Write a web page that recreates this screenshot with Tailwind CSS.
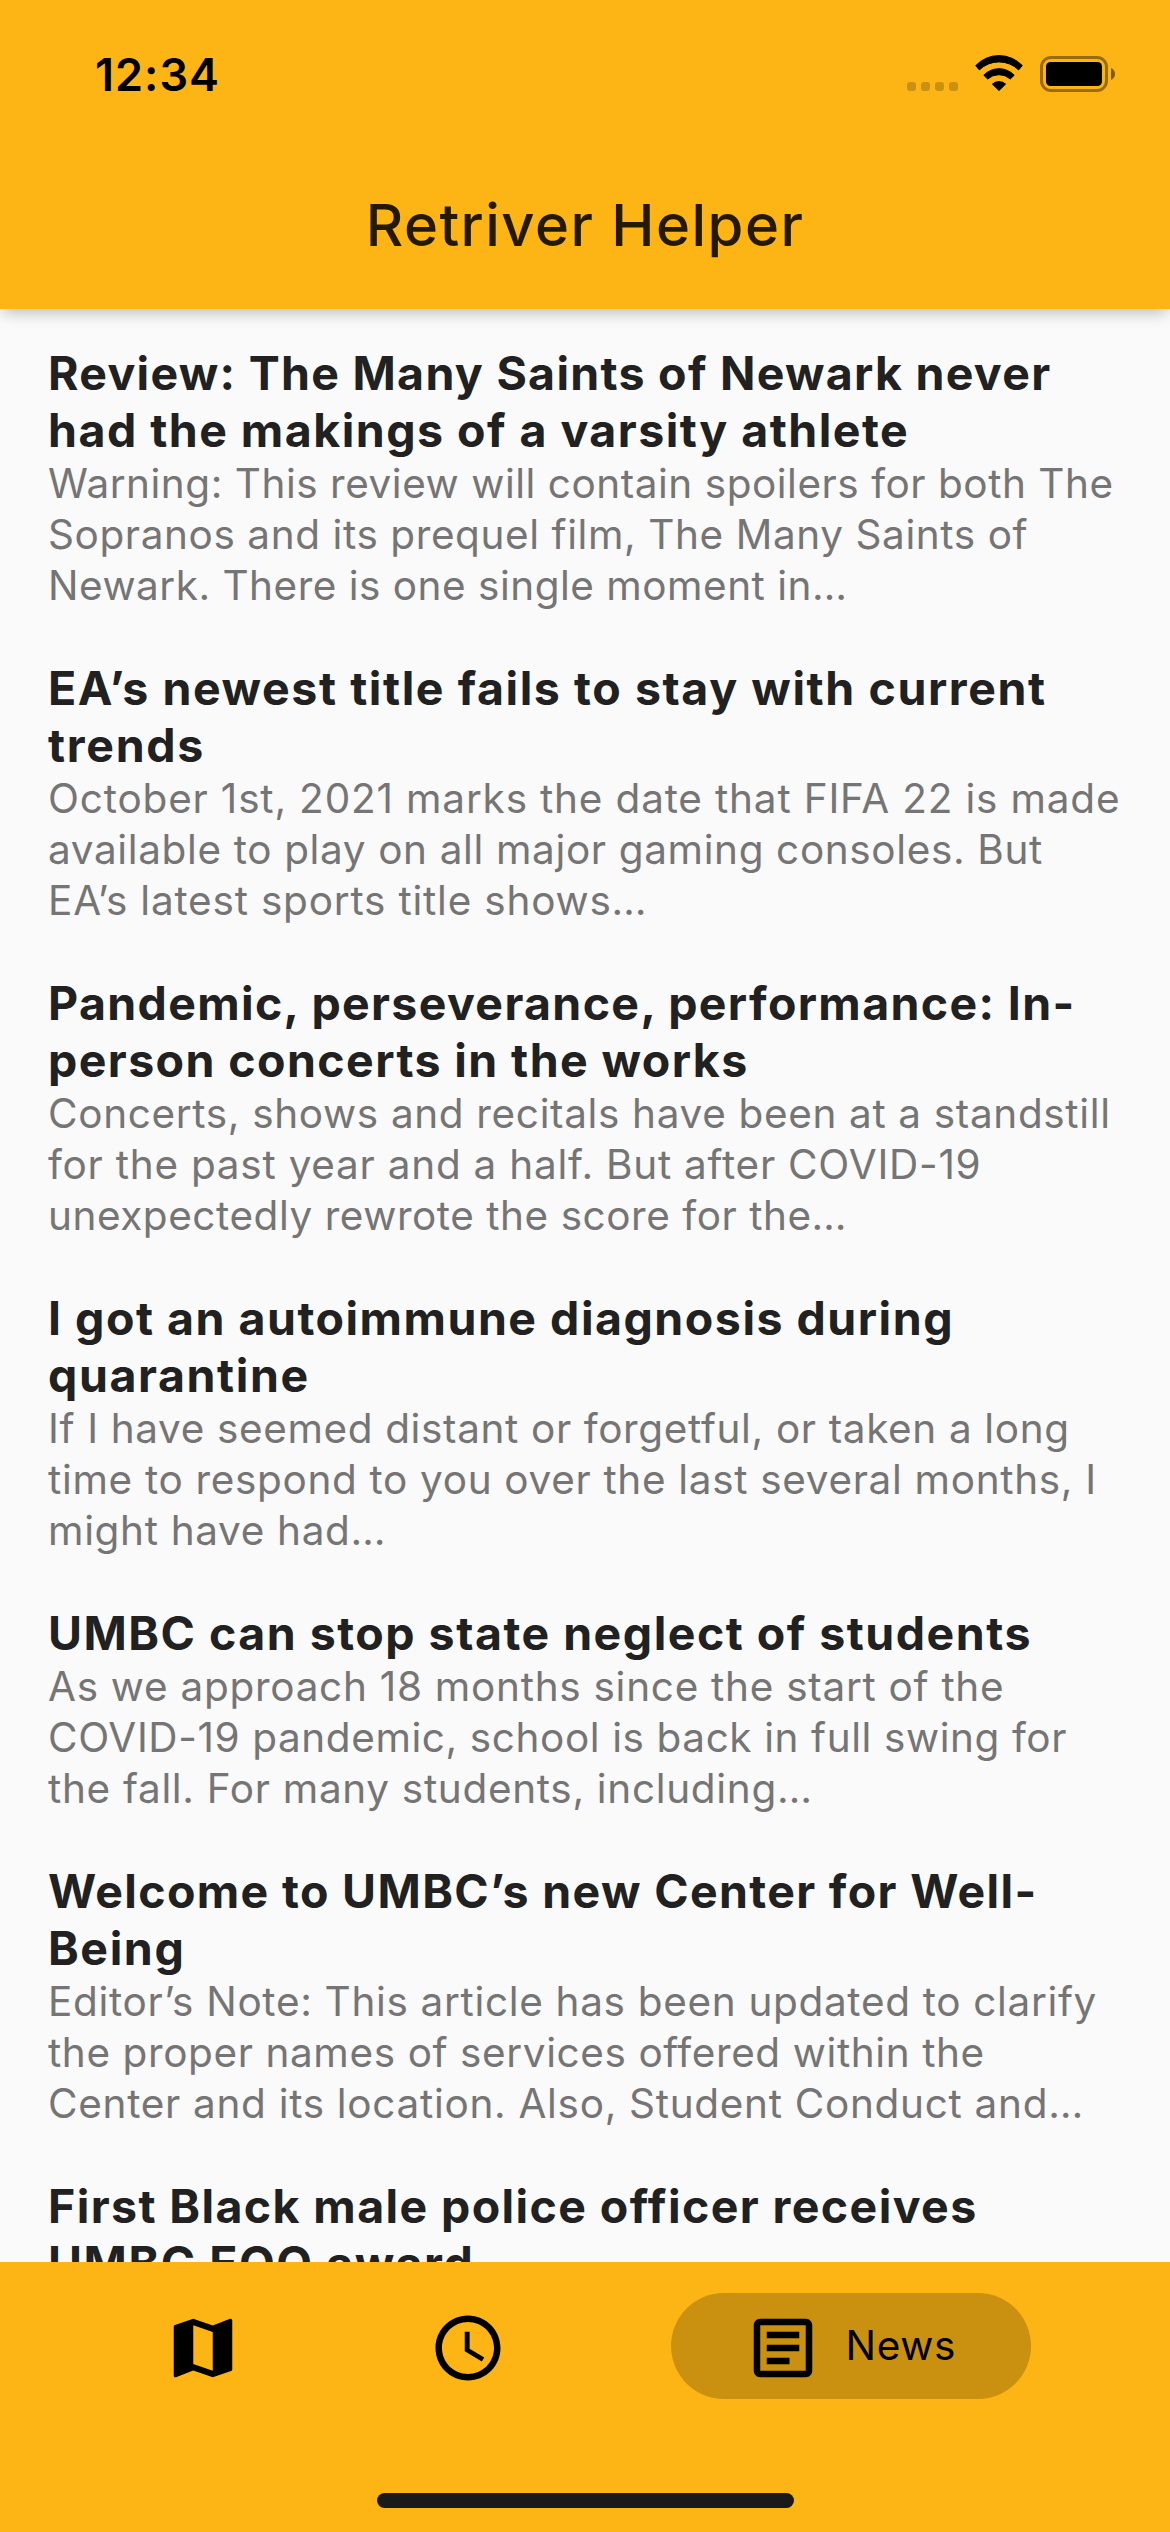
<!DOCTYPE html>
<html lang="en">
<head>
<meta charset="utf-8">
<title>Retriver Helper</title>
<script src="https://cdn.jsdelivr.net/npm/@tailwindcss/browser@4"></script>
</head>
<body class="font-['Inter',sans-serif] bg-[#fafafa]">
<div class="w-[1170px] h-[2532px] flex flex-col overflow-hidden bg-[#fafafa]">

  <header class="h-[309px] shrink-0 relative z-10 bg-[#fdb515] shadow-[0_6px_15px_-3px_rgba(0,0,0,0.27)]">
    <!-- Status bar -->
    <div class="h-[141px] pl-[95px] pr-[54px] flex items-start justify-between text-black">
      <span class="mt-[48px] text-[45px] leading-[54px] font-semibold tracking-[1px]">12:34</span>
      <div class="mt-[55px] flex items-start">
        <div class="flex gap-[5px] mt-[27px]">
          <i class="size-[9px] rounded-[3px] bg-black/20"></i>
          <i class="size-[9px] rounded-[3px] bg-black/20"></i>
          <i class="size-[9px] rounded-[3px] bg-black/20"></i>
          <i class="size-[9px] rounded-[3px] bg-black/20"></i>
        </div>
        <svg class="ml-[17px]" width="48" height="36" viewBox="0 0 48 36" fill="#000">
          <path stroke="#000" stroke-width="1" stroke-linejoin="round" d="M.7 10.6A32 32 0 0 1 47.3 10.6L43.6 14.9A28 28 0 0 0 4.4 14.9Z"/>
          <path stroke="#000" stroke-width="1" stroke-linejoin="round" d="M8.8 20.2A21 21 0 0 1 39.2 20.2L35.3 24A17 17 0 0 0 12.7 24Z"/>
          <path stroke="#000" stroke-width="1" stroke-linejoin="round" d="M17.4 29.1A10 10 0 0 1 30.6 29.1L24 35.6Z"/>
        </svg>
        <svg class="ml-[17px] mt-px" width="76" height="36" viewBox="0 0 76 36">
          <rect x="1.5" y="1.5" width="65" height="33" rx="9.5" fill="none" stroke="#000" stroke-opacity=".4" stroke-width="3"/>
          <rect x="6" y="6" width="56" height="24" rx="4.5" fill="#000"/>
          <path d="M71 12C73.6 13 75 15.400 75 18S73.600 23 71 24Z" fill="#000" fill-opacity=".5"/>
        </svg>
      </div>
    </div>
    <!-- App bar -->
    <div class="h-[168px] flex items-center justify-center">
      <h1 class="text-[58px] leading-[70px] font-medium tracking-[1.46px] text-[#241a03]">Retriver Helper</h1>
    </div>
  </header>

  <main class="h-[1953px] shrink-0 overflow-hidden pt-[35.500px] px-[48px] flex flex-col gap-[49px] whitespace-nowrap">
    <article>
      <h2 class="text-[46.5px] leading-[57px] font-bold text-[#212121]"><span class="block tracking-[1.28px]">Review: The Many Saints of Newark never</span><span class="block tracking-[1.47px]">had the makings of a varsity athlete</span></h2>
      <p class="-mt-px text-[40.5px] leading-[51px] text-[#757575]"><span class="block tracking-[0.53px]">Warning: This review will contain spoilers for both The</span><span class="block tracking-[0.59px]">Sopranos and its prequel film, The Many Saints of</span><span class="block tracking-[0.5px]">Newark. There is one single moment in…</span></p>
    </article>
    <article>
      <h2 class="text-[46.5px] leading-[57px] font-bold text-[#212121]"><span class="block tracking-[1.58px]">EA’s newest title fails to stay with current</span><span class="block tracking-[1.7px]">trends</span></h2>
      <p class="-mt-px text-[40.5px] leading-[51px] text-[#757575]"><span class="block tracking-[0.82px]">October 1st, 2021 marks the date that FIFA 22 is made</span><span class="block tracking-[0.63px]">available to play on all major gaming consoles. But</span><span class="block tracking-[0.79px]">EA’s latest sports title shows…</span></p>
    </article>
    <article>
      <h2 class="text-[46.5px] leading-[57px] font-bold text-[#212121]"><span class="block tracking-[1.34px]">Pandemic, perseverance, performance: In-</span><span class="block tracking-[1.4px]">person concerts in the works</span></h2>
      <p class="-mt-px text-[40.5px] leading-[51px] text-[#757575]"><span class="block tracking-[0.65px]">Concerts, shows and recitals have been at a standstill</span><span class="block tracking-[0.75px]">for the past year and a half. But after COVID-19</span><span class="block tracking-[0.54px]">unexpectedly rewrote the score for the…</span></p>
    </article>
    <article>
      <h2 class="text-[46.5px] leading-[57px] font-bold text-[#212121]"><span class="block tracking-[1.5px]">I got an autoimmune diagnosis during</span><span class="block tracking-[1.6px]">quarantine</span></h2>
      <p class="-mt-px text-[40.5px] leading-[51px] text-[#757575]"><span class="block tracking-[0.63px]">If I have seemed distant or forgetful, or taken a long</span><span class="block tracking-[0.67px]">time to respond to you over the last several months, I</span><span class="block tracking-[0.66px]">might have had…</span></p>
    </article>
    <article>
      <h2 class="text-[46.5px] leading-[57px] font-bold text-[#212121]"><span class="block tracking-[1.49px]">UMBC can stop state neglect of students</span></h2>
      <p class="-mt-px text-[40.5px] leading-[51px] text-[#757575]"><span class="block tracking-[0.72px]">As we approach 18 months since the start of the</span><span class="block tracking-[0.59px]">COVID-19 pandemic, school is back in full swing for</span><span class="block tracking-[0.68px]">the fall. For many students, including…</span></p>
    </article>
    <article>
      <h2 class="text-[46.5px] leading-[57px] font-bold text-[#212121]"><span class="block tracking-[1.34px]">Welcome to UMBC’s new Center for Well-</span><span class="block tracking-[1.6px]">Being</span></h2>
      <p class="-mt-px text-[40.5px] leading-[51px] text-[#757575]"><span class="block tracking-[0.67px]">Editor’s Note: This article has been updated to clarify</span><span class="block tracking-[0.6px]">the proper names of services offered within the</span><span class="block tracking-[0.69px]">Center and its location. Also, Student Conduct and…</span></p>
    </article>
    <article>
      <h2 class="text-[46.5px] leading-[57px] font-bold text-[#212121]"><span class="block tracking-[1.39px]">First Black male police officer receives</span><span class="block tracking-[1.52px]">UMBC EOO award</span></h2>
    </article>
  </main>

  <nav class="h-[270px] shrink-0 bg-[#fdb515] flex flex-col justify-between items-center pt-[31px] pb-[24px]">
    <div class="w-full pl-[164px] flex items-center">
      <svg class="size-[78px] mt-[4px]" viewBox="0 0 24 24" fill="#000"><path d="M20.5 3l-.16.03L15 5.100 9 3 3.360 4.900c-.21.07-.36.25-.36.48V20.500c0 .28.22.5.5.5l.16-.03L9 18.900l6 2.100 5.640-1.900c.21-.07.36-.25.36-.48V3.500c0-.28-.22-.5-.5-.5zM15 19l-6-2.110V5l6 2.110V19z"/></svg>
      <svg class="size-[78px] mt-[4px] ml-[187px]" viewBox="0 0 24 24" fill="#000"><path d="M11.990 2C6.470 2 2 6.480 2 12s4.470 10 9.990 10C17.520 22 22 17.520 22 12S17.520 2 11.990 2zM12 20c-4.420 0-8-3.580-8-8s3.580-8 8-8 8 3.580 8 8-3.580 8-8 8zm.5-13H11v6l5.250 3.150.75-1.230-4.500-2.670z"/></svg>
      <div class="ml-[163.5px] w-[360px] h-[105.5px] rounded-full bg-[#ca9111] pl-[73.500px] flex items-center">
        <svg class="size-[78px] mt-[4px]" viewBox="0 0 24 24" fill="#000"><path d="M19 5v14H5V5h14m0-2H5c-1.100 0-2 .9-2 2v14c0 1.100.9 2 2 2h14c1.100 0 2-.9 2-2V5c0-1.100-.9-2-2-2z"/><path d="M14 17H7v-2h7v2zm3-4H7v-2h10v2zm0-4H7V7h10v2z"/></svg>
        <span class="ml-[23.500px] text-[40.5px] leading-[51px] tracking-[0.68px] text-black">News</span>
      </div>
    </div>
    <div class="w-[417px] h-[15px] rounded-full bg-[#1a1a1a]"></div>
  </nav>
</div>
</body>
</html>
